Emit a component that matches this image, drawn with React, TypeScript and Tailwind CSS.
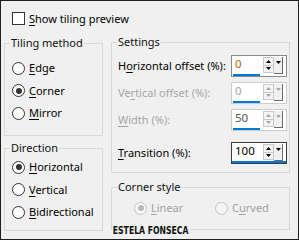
import React from 'react';

type Part = { t: string; u: number };

const Label = ({ t, u }: Part) => (
  <>
    {t.slice(0, u)}
    <span className="underline underline-offset-[2px] decoration-[1px]">{t[u]}</span>
    {t.slice(u + 1)}
  </>
);

function Radio({ label, checked, disabled }: { label: Part; checked?: boolean; disabled?: boolean }) {
  return (
    <div className="flex items-center gap-[4px] h-full">
      <div
        className={`w-[13px] h-[13px] rounded-full border flex items-center justify-center shrink-0 ${
          disabled ? 'border-[#c4c4c4] bg-[#f4f4f4]' : 'border-[#333333] bg-white'
        } ${disabled && checked ? 'bg-[#e6e6e6]' : ''}`}
      >
        {checked && <div className={`w-[6px] h-[6px] rounded-full ${disabled ? 'bg-[#b8b8b8] ring-1 ring-white' : 'bg-[#333333]'}`} />}
      </div>
      <span className={`leading-[16px] ${disabled ? 'text-[#a0a0a0]' : 'text-black'}`}>
        <Label {...label} />
      </span>
    </div>
  );
}

function Arrow({ up, disabled }: { up?: boolean; disabled?: boolean }) {
  return (
    <svg width="5" height="3" viewBox="0 0 5 3" className="block">
      <path d={up ? 'M0 3 L2.5 0 L5 3 Z' : 'M0 0 L5 0 L2.5 3 Z'} fill={disabled ? '#a6a6a6' : '#000'} />
    </svg>
  );
}

function Spin({ value, color, disabled, focused }: { value: string; color: string; disabled?: boolean; focused?: boolean }) {
  return (
    <div
      className={`w-[56px] h-[22px] border bg-white flex flex-col ${
        focused ? 'border-[#3c3c3c]' : disabled ? 'border-[#cccccc]' : 'border-[#8a8a8a]'
      }`}
    >
      <div className="flex flex-1">
        <div className={`w-[30px] pl-[3px] leading-[16px] text-[11.5px] ${color}`}>{value}</div>
        <div className="ml-[1px] mt-[1px] w-[11px] h-[16px] border border-[#c8c8c8] bg-[#f4f4f4] flex flex-col">
          <div className="flex-1 flex items-center justify-center border-b border-[#c8c8c8]">
            <Arrow up disabled={disabled} />
          </div>
          <div className="flex-1 flex items-center justify-center">
            <Arrow disabled={disabled} />
          </div>
        </div>
        <div className="mt-[1px] w-[9px] h-[17px] border-r border-b border-[#6a6a6a] bg-[#f0f0f0] flex items-start justify-center pt-[4px]">
          <Arrow disabled={disabled} />
        </div>
      </div>
      <div className={`h-[3px] bg-[#0078d7] ${focused ? 'w-full' : 'w-[27px] ml-[1px]'}`} />
    </div>
  );
}

function Group({ title, className, children }: { title: string; className: string; children?: React.ReactNode }) {
  return (
    <div className={`border border-[#d9d9d9] ${className}`}>
      <div className="-mt-[9px] w-fit px-[1px] bg-[#f0f0f0] leading-[16px] text-[#111111] ml-[5px]">{title}</div>
      {children}
    </div>
  );
}

function Row({ label, disabled, children }: { label: Part; disabled?: boolean; children: React.ReactNode }) {
  return (
    <div className="h-[22px] flex items-center justify-between pl-[6px] pr-[2px]">
      <span className={`leading-[16px] ${disabled ? 'text-[#a6a6a6]' : 'text-black'}`}>
        <Label {...label} />
      </span>
      {children}
    </div>
  );
}

export default function App() {
  return (
    <div className="w-[299px] h-[240px] border border-[#1f1f1f] bg-[#f0f0f0] relative overflow-hidden text-[11px] text-black [font-family:'Noto_Sans',sans-serif]">
      <div className="flex items-center gap-[4px] mt-[11px] ml-[11px] h-[13px]">
        <div className="w-[13px] h-[13px] border border-[#333333] bg-white" />
        <span className="leading-[16px]">
          <Label t="Show tiling preview" u={0} />
        </span>
      </div>

      <div className="flex items-start gap-[8px] ml-[3px] mt-[18px]">
        <div className="w-[99px] flex flex-col">
          <Group title="Tiling method" className="h-[93px]">
            <div className="mt-[6px] pl-[7px]">
              <div className="h-[22.5px]"><Radio label={{ t: 'Edge', u: 0 }} /></div>
              <div className="h-[22.5px]"><Radio label={{ t: 'Corner', u: 0 }} checked /></div>
              <div className="h-[22.5px]"><Radio label={{ t: 'Mirror', u: 0 }} /></div>
            </div>
          </Group>
          <Group title="Direction" className="h-[83px] mt-[12px]">
            <div className="pl-[7px]">
              <div className="h-[22.5px]"><Radio label={{ t: 'Horizontal', u: 0 }} checked /></div>
              <div className="h-[22.5px]"><Radio label={{ t: 'Vertical', u: 0 }} /></div>
              <div className="h-[22.5px]"><Radio label={{ t: 'Bidirectional', u: 0 }} /></div>
            </div>
          </Group>
        </div>

        <div className="w-[179px] flex flex-col -mt-[1px]">
          <Group title="Settings" className="h-[131px]">
            <div className="mt-[5px] flex flex-col gap-[5px]">
              <Row label={{ t: 'Horizontal offset (%):', u: 1 }}>
                <Spin value="0" color="text-[#b8660c]" />
              </Row>
              <Row label={{ t: 'Vertical offset (%):', u: 2 }} disabled>
                <Spin value="0" color="text-[#a6a6a6]" disabled />
              </Row>
              <Row label={{ t: 'Width (%):', u: 0 }} disabled>
                <Spin value="50" color="text-[#555555]" disabled />
              </Row>
              <div className="mt-[6px]">
                <Row label={{ t: 'Transition (%):', u: 0 }}>
                  <Spin value="100" color="text-black" focused />
                </Row>
              </div>
            </div>
          </Group>
          <Group title="Corner style" className="h-[43px] mt-[14px]">
            <div className="mt-[2px] h-[22px] flex pl-[22px]">
              <div className="w-[81px] h-full"><Radio label={{ t: 'Linear', u: 0 }} checked disabled /></div>
              <div className="h-full"><Radio label={{ t: 'Curved', u: 1 }} disabled /></div>
            </div>
          </Group>
        </div>
      </div>

      <div className="absolute left-[111px] top-[224px] px-[1px] bg-[#f0f0f0] leading-[12px] text-[11px] font-bold text-[#111111] origin-left scale-x-[0.78] [font-family:'Liberation_Sans_Narrow','DejaVu_Sans_Condensed',sans-serif]">
        ESTELA FONSECA
      </div>
    </div>
  );
}
